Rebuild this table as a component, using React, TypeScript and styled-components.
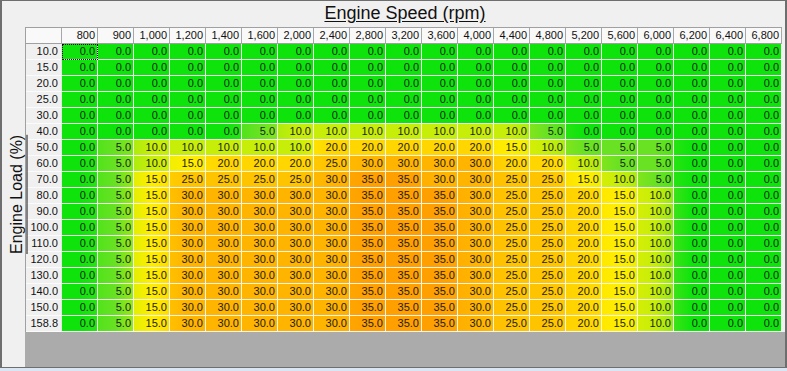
import React from "react";
import styled, { createGlobalStyle } from "styled-components";

const SPEEDS = [800, 900, 1000, 1200, 1400, 1600, 2000, 2400, 2800, 3200, 3600, 4000, 4400, 4800, 5200, 5600, 6000, 6200, 6400, 6800];
const LOADS = [10, 15, 20, 25, 30, 40, 50, 60, 70, 80, 90, 100, 110, 120, 130, 140, 150, 158.8];

const ZERO = SPEEDS.map(() => 0);
const FULL = [0, 5, 15, 30, 30, 30, 30, 30, 35, 35, 35, 30, 25, 25, 20, 15, 10, 0, 0, 0];

const TABLE: number[][] = [
    ZERO, ZERO, ZERO, ZERO, ZERO,
    [0, 0, 0, 0, 0, 5, 10, 10, 10, 10, 10, 10, 10, 5, 0, 0, 0, 0, 0, 0],
    [0, 5, 10, 10, 10, 10, 10, 20, 20, 20, 20, 20, 15, 10, 5, 5, 5, 0, 0, 0],
    [0, 5, 10, 15, 20, 20, 20, 25, 30, 30, 30, 30, 20, 20, 10, 5, 5, 0, 0, 0],
    [0, 5, 15, 25, 25, 25, 25, 30, 35, 35, 30, 30, 25, 25, 15, 10, 5, 0, 0, 0],
    FULL, FULL, FULL, FULL, FULL, FULL, FULL, FULL, FULL,
];

// value -> rgb, stops every 5.0
const STOPS: [number, number, number][] = [
    [14, 228, 12],
    [104, 226, 34],
    [198, 238, 8],
    [255, 238, 0],
    [255, 214, 0],
    [255, 196, 0],
    [255, 180, 0],
    [255, 160, 0],
];

const colorOf = (v: number) => {
    const t = Math.max(0, Math.min(35, v)) / 5;
    const i = Math.min(STOPS.length - 2, Math.floor(t));
    const f = t - i;
    const a = STOPS[i];
    const b = STOPS[i + 1];
    const c = a.map((x, k) => Math.round(x + (b[k] - x) * f));
    return `rgb(${c[0]}, ${c[1]}, ${c[2]})`;
};

const cellBackground = (r: number, c: number) => {
    const v = TABLE[r][c];
    const left = c > 0 ? TABLE[r][c - 1] : v;
    const right = c < SPEEDS.length - 1 ? TABLE[r][c + 1] : v;
    return `linear-gradient(to right, ${colorOf(v * 0.75 + left * 0.25)}, ${colorOf(v)} 50%, ${colorOf(v * 0.75 + right * 0.25)})`;
};

const GlobalStyle = createGlobalStyle`
    html, body {
        margin: 0;
        padding: 0;
        background: #dbe6f4;
    }
    body {
        font-family: "Liberation Sans", Arial, sans-serif;
    }
`;

const Panel = styled.div`
    box-sizing: border-box;
    width: 787px;
    height: 368px;
    background: #f0f0f0;
    border: 1px solid #6e6e6e;
    border-left-width: 2px;
    border-right-width: 2px;
    display: grid;
    grid-template-columns: 23px 1fr;
    grid-template-rows: 26px 1fr;
`;

const Title = styled.div`
    grid-column: 2;
    display: flex;
    justify-content: center;
    align-items: flex-start;
    padding-top: 2px;
    font-size: 18px;
    color: #111;
    text-decoration: underline;
    text-underline-offset: 2px;
`;

// rotated 180deg: padding-right shows on the left, padding-top shows at the bottom
const SideLabel = styled.div`
    grid-column: 1;
    grid-row: 2;
    display: flex;
    align-items: center;
    justify-content: center;
    padding-right: 6px;
    padding-top: 6px;
    writing-mode: vertical-rl;
    transform: rotate(180deg);
    font-size: 16px;
    color: #111;
    text-decoration: underline;
    text-underline-offset: 2px;
`;

const TableArea = styled.div`
    grid-column: 2;
    grid-row: 2;
    display: flex;
    flex-direction: column;
`;

const Grid = styled.div`
    display: grid;
    grid-template-columns: repeat(21, 36px);
    grid-auto-rows: 16px;
    width: max-content;
    border-top: 1px solid #a0a0a0;
    border-left: 1px solid #a0a0a0;
    font-size: 11px;
`;

const HeadCell = styled.div`
    box-sizing: border-box;
    background: #f9f9f9;
    border-right: 1px solid #a8a8a8;
    border-bottom: 1px solid #a0a0a0;
    text-align: right;
    padding-right: 2px;
    line-height: 15px;
    color: #111;
`;

const RowHead = styled.div`
    box-sizing: border-box;
    background: #f0f0f0;
    border-bottom: 1px solid #fbfbfb;
    border-right: 1px solid #e4e4e4;
    text-align: right;
    padding-right: 3px;
    line-height: 15px;
    color: #111;
`;

const Cell = styled.div<{ $focused?: boolean }>`
    box-sizing: border-box;
    border-right: 1px solid #f4f4f4;
    border-bottom: 1px solid #f4f4f4;
    text-align: right;
    padding-right: 2px;
    line-height: 15px;
    color: #1c1c1c;
    outline: ${(p) => (p.$focused ? "1px dotted #000" : "none")};
    outline-offset: -1px;
`;

const Filler = styled.div`
    flex: 1;
    background: #ababab;
`;

const fmtSpeed = (n: number) => n.toLocaleString("en-US");

export default function App() {
    return (
        <>
            <GlobalStyle />
            <Panel>
                <Title>Engine Speed (rpm)</Title>
                <SideLabel>Engine Load (%)</SideLabel>
                <TableArea>
                    <Grid>
                        <HeadCell />
                        {SPEEDS.map((s) => (
                            <HeadCell key={s}>{fmtSpeed(s)}</HeadCell>
                        ))}
                        {LOADS.map((load, r) => (
                            <React.Fragment key={load}>
                                <RowHead>{load.toFixed(1)}</RowHead>
                                {TABLE[r].map((v, c) => (
                                    <Cell
                                        key={c}
                                        $focused={r === 0 && c === 0}
                                        style={{ background: cellBackground(r, c) }}
                                    >
                                        {v.toFixed(1)}
                                    </Cell>
                                ))}
                            </React.Fragment>
                        ))}
                    </Grid>
                    <Filler />
                </TableArea>
            </Panel>
        </>
    );
}
